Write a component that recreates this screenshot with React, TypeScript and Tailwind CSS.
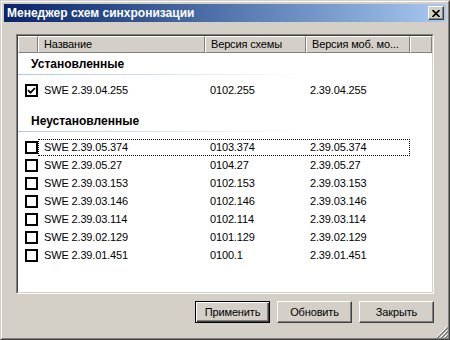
import React from "react";

const installed = [{ name: "SWE 2.39.04.255", schema: "0102.255", mobile: "2.39.04.255" }];

const notInstalled = [
  { name: "SWE 2.39.05.374", schema: "0103.374", mobile: "2.39.05.374" },
  { name: "SWE 2.39.05.27", schema: "0104.27", mobile: "2.39.05.27" },
  { name: "SWE 2.39.03.153", schema: "0102.153", mobile: "2.39.03.153" },
  { name: "SWE 2.39.03.146", schema: "0102.146", mobile: "2.39.03.146" },
  { name: "SWE 2.39.03.114", schema: "0102.114", mobile: "2.39.03.114" },
  { name: "SWE 2.39.02.129", schema: "0101.129", mobile: "2.39.02.129" },
  { name: "SWE 2.39.01.451", schema: "0100.1", mobile: "2.39.01.451" },
];

type Row = { name: string; schema: string; mobile: string };

function Checkbox({ checked }: { checked: boolean }) {
  return (
    <div className="ml-[7px] w-[13px] h-[13px] border-2 border-black bg-white flex items-center justify-center">
      {checked && (
        <svg width="9" height="9" viewBox="0 0 9 9">
          <path d="M1 4.2 L3.5 6.7 L8 2" fill="none" stroke="#000" strokeWidth="1.8" />
        </svg>
      )}
    </div>
  );
}

function ListRow({ row, checked, focused }: { row: Row; checked: boolean; focused?: boolean }) {
  return (
    <div className="flex h-[18px] items-center">
      <div className="w-[20px] flex items-center">
        <Checkbox checked={checked} />
      </div>
      <div
        className={`flex h-[17px] items-center ${
          focused ? "border border-dotted border-black" : "border border-transparent"
        }`}
      >
        <div className="w-[165px] pl-[5px]">{row.name}</div>
        <div className="w-[101px] pl-[6px]">{row.schema}</div>
        <div className="w-[104px] pl-[5px]">{row.mobile}</div>
      </div>
    </div>
  );
}

function GroupHeader({ title }: { title: string }) {
  return (
    <div>
      <div className="h-[21px] flex items-center pl-[13px] font-bold text-[12px] tracking-[0px]">{title}</div>
      <div className="h-px w-[290px] bg-linear-to-r from-[#AFC6E9] to-white" />
    </div>
  );
}

function HeaderCell({ label, width }: { label?: string; width: string }) {
  return (
    <div
      className={`${width} h-full border-t border-l border-white border-r border-b border-r-[#808080] border-b-[#808080] pl-[5px] flex items-center whitespace-nowrap overflow-hidden`}
    >
      {label}
    </div>
  );
}

function Button({ label, isDefault }: { label: string; isDefault?: boolean }) {
  return isDefault ? (
    <div className="w-[75px] h-[22px] border border-black shadow-[inset_1px_1px_#fff,inset_-1px_-1px_#404040,inset_-2px_-2px_#808080] flex items-center justify-center">
      {label}
    </div>
  ) : (
    <div className="w-[75px] h-[22px] border border-t-white border-l-white border-r-[#404040] border-b-[#404040] shadow-[inset_-1px_-1px_#808080] flex items-center justify-center">
      {label}
    </div>
  );
}

export default function App() {
  return (
    <div className="w-[450px] h-[340px] relative bg-[#D4D0C8] border border-t-[#D4D0C8] border-l-[#D4D0C8] border-r-[#404040] border-b-[#404040] font-['Liberation_Sans',Arial,sans-serif] text-[11px] text-black tracking-[-0.15px]">
      <div className="h-full border border-t-white border-l-white border-r-[#808080] border-b-[#808080] p-[2px] flex flex-col">
        {/* Title bar */}
        <div className="h-[18px] bg-linear-to-r from-[#0A246A] to-[#A6CAF0] flex items-center justify-between pl-[3px] pr-[2px]">
          <span className="text-white font-bold text-[12px] tracking-[0px]">Менеджер схем синхронизации</span>
          <div className="w-[16px] h-[14px] bg-[#D4D0C8] border border-t-white border-l-white border-r-[#404040] border-b-[#404040] shadow-[inset_-1px_-1px_#808080] flex items-center justify-center">
            <svg width="8" height="7" viewBox="0 0 8 7">
              <path d="M0.5 0 L7.5 7 M7.5 0 L0.5 7" stroke="#000" strokeWidth="1.6" />
            </svg>
          </div>
        </div>

        <div className="flex-1 px-[12px] pt-[12px] flex flex-col">
          {/* List view */}
          <div className="h-[260px] border border-t-[#808080] border-l-[#808080] border-r-white border-b-white">
            <div className="h-full border border-t-[#404040] border-l-[#404040] border-r-[#D4D0C8] border-b-[#D4D0C8] bg-white flex flex-col">
              <div className="h-[17px] flex bg-[#D4D0C8] shrink-0">
                <HeaderCell width="w-[20px]" />
                <HeaderCell width="w-[167px]" label="Название" />
                <HeaderCell width="w-[101px]" label="Версия схемы" />
                <HeaderCell width="w-[104px]" label="Версия моб. мо..." />
                <HeaderCell width="flex-1" />
              </div>

              <GroupHeader title="Установленные" />
              <div className="h-[6px]" />
              {installed.map((r) => (
                <ListRow key={r.name} row={r} checked />
              ))}

              <div className="h-[11px]" />
              <GroupHeader title="Неустановленные" />
              <div className="h-[6px]" />
              {notInstalled.map((r, i) => (
                <ListRow key={r.name} row={r} checked={false} focused={i === 0} />
              ))}
            </div>
          </div>

          {/* Buttons */}
          <div className="mt-[7px] flex justify-end gap-[7px]">
            <Button label="Применить" isDefault />
            <Button label="Обновить" />
            <Button label="Закрыть" />
          </div>
        </div>
      </div>

      {/* Size grip */}
      <svg className="absolute right-[1px] bottom-[1px]" width="12" height="12" viewBox="0 0 12 12">
        <path d="M11 1 L1 11 M11 5 L5 11 M11 9 L9 11" stroke="#fff" strokeWidth="1" />
        <path d="M12 1 L1 12 M12 2 L2 12 M12 5 L5 12 M12 6 L6 12 M12 9 L9 12 M12 10 L10 12" stroke="#808080" strokeWidth="1" />
      </svg>
    </div>
  );
}
